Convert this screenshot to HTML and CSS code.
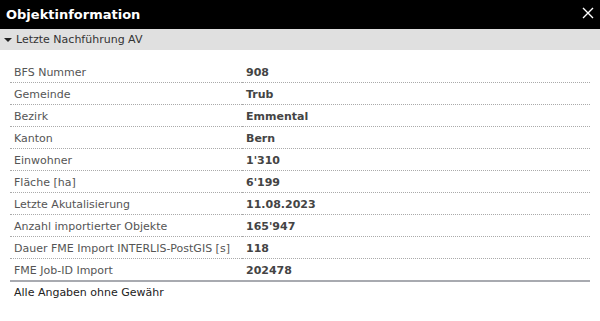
FILE: index.html
```html
<!DOCTYPE html>
<html lang="de">
<head>
    <meta charset="UTF-8">
    <meta name="viewport" content="width=device-width, initial-scale=1.0">
    <title>Objektinformation</title>
    <link rel="stylesheet" href="styles.css">
</head>
<body>
    <div class="dialog">
        <div class="titlebar">
            <span class="title">Objektinformation</span>
            <svg class="close" width="12" height="12" viewBox="0 0 12 12">
                <path d="M1 1 L11 11 M11 1 L1 11" stroke="#fff" stroke-width="1.4" fill="none"/>
            </svg>
        </div>
        <div class="section">
            <span class="arrow"></span>Letzte Nachführung AV
        </div>
        <div class="content">
            <table class="info">
                <tr><td>BFS Nummer</td><td>908</td></tr>
                <tr><td>Gemeinde</td><td>Trub</td></tr>
                <tr><td>Bezirk</td><td>Emmental</td></tr>
                <tr><td>Kanton</td><td>Bern</td></tr>
                <tr><td>Einwohner</td><td>1'310</td></tr>
                <tr><td>Fläche [ha]</td><td>6'199</td></tr>
                <tr><td>Letzte Akutalisierung</td><td>11.08.2023</td></tr>
                <tr><td>Anzahl importierter Objekte</td><td>165'947</td></tr>
                <tr><td>Dauer FME Import INTERLIS-PostGIS [s]</td><td>118</td></tr>
                <tr class="last"><td>FME Job-ID Import</td><td>202478</td></tr>
            </table>
            <p class="note">Alle Angaben ohne Gewähr</p>
        </div>
    </div>
</body>
</html>
```

FILE: styles.css
```css
body {
    margin: 0;
    font-family: "DejaVu Sans", sans-serif;
    background: #fff;
}
.dialog {
    width: 600px;
}
.titlebar {
    background: #000;
    color: #fff;
    height: 29px;
    display: flex;
    align-items: center;
    justify-content: space-between;
    padding: 0 6px 0 6px;
}
.title {
    font-weight: bold;
    font-size: 13px;
}
.close {
    margin-top: -4px;
}
.section {
    background: #e0e0e0;
    height: 21px;
    display: flex;
    align-items: center;
    padding-left: 4px;
    font-size: 11px;
    color: #333;
}
.arrow {
    width: 0;
    height: 0;
    border-left: 4px solid transparent;
    border-right: 4px solid transparent;
    border-top: 4px solid #222;
    margin-right: 4px;
}
.content {
    padding: 11px 10px 0 10px;
}
.info {
    width: 580px;
    border-collapse: collapse;
    font-size: 11px;
}
.info td {
    height: 19px;
    padding: 2px 4px 0 4px;
    border-bottom: 1px dotted #aaa;
    vertical-align: middle;
}
.info td:first-child {
    width: 224px;
    color: #555;
}
.info td:last-child {
    font-weight: bold;
    color: #444;
}
.info tr.last td {
    border-bottom: 2px solid #a8aab0;
}
.note {
    margin: 4px 0 0 4px;
    font-size: 11px;
    color: #222;
}
```
